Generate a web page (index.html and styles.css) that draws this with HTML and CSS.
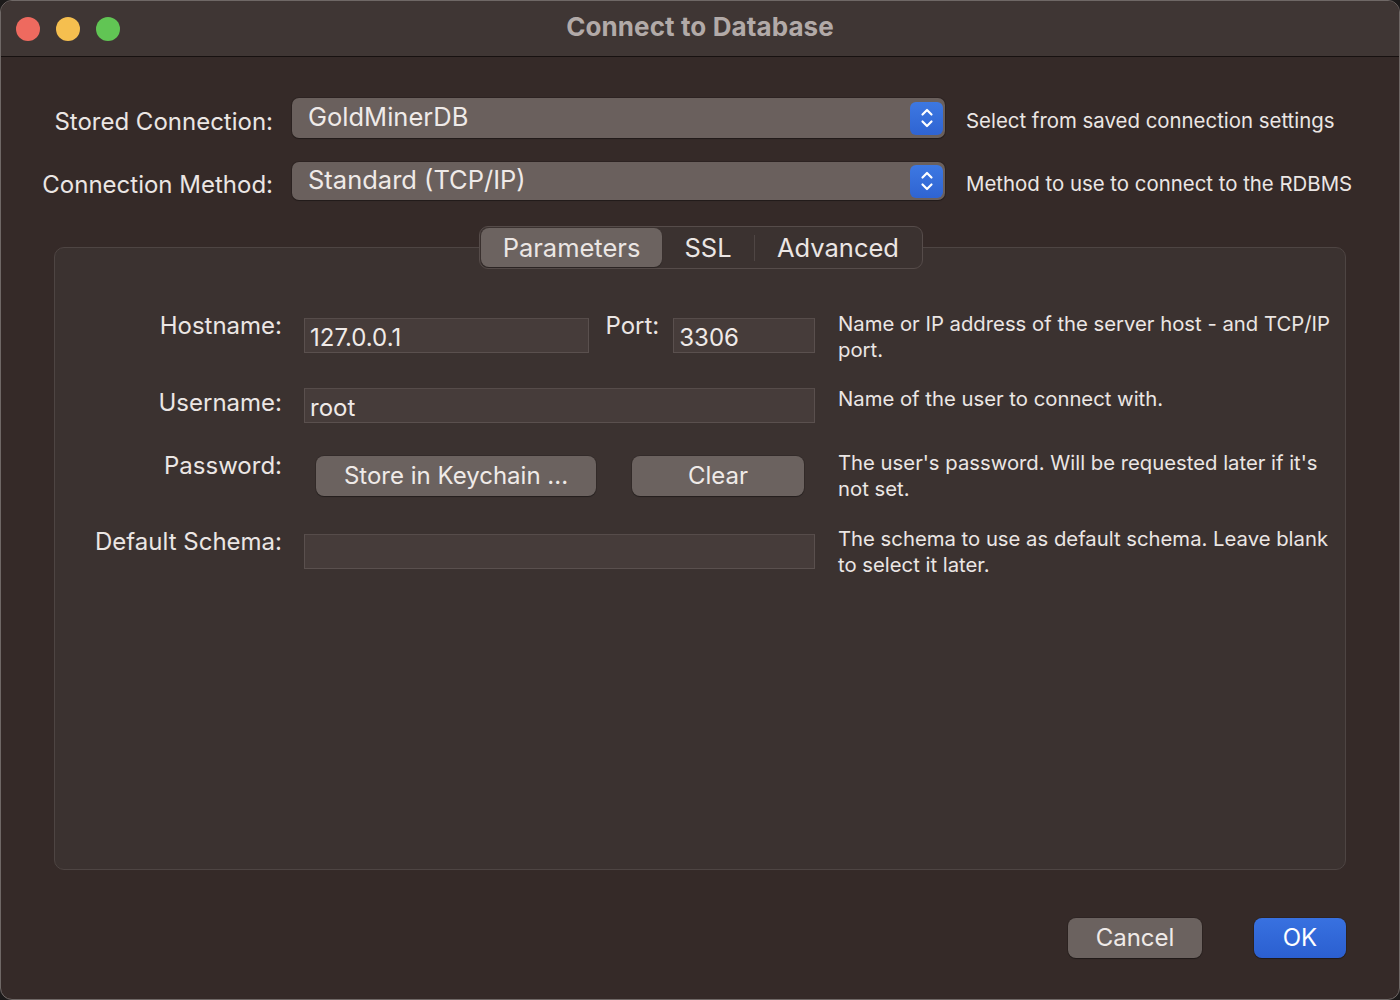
FILE: index.html
```html
<!DOCTYPE html>
<html lang="en">
<head>
<meta charset="utf-8">
<title>Connect to Database</title>
<link rel="stylesheet" href="styles.css">
</head>
<body>
<div class="window">
  <div class="titlebar">
    <div class="lights">
      <span class="light red"></span>
      <span class="light yellow"></span>
      <span class="light green"></span>
    </div>
    <div class="title">Connect to Database</div>
    <div class="spacer"></div>
  </div>
  <div class="content">
    <div class="top-grid">
      <div class="top-label">Stored Connection:</div>
      <div class="popup popup-tall">
        <span class="popup-text">GoldMinerDB</span>
        <span class="stepper">
          <svg width="16" height="24" viewBox="0 0 16 24"><path d="M3.5 8.5 L8 4 L12.5 8.5" fill="none" stroke="#fff" stroke-width="2.2" stroke-linecap="round" stroke-linejoin="round"/><path d="M3.5 15.5 L8 20 L12.5 15.5" fill="none" stroke="#fff" stroke-width="2.2" stroke-linecap="round" stroke-linejoin="round"/></svg>
        </span>
      </div>
      <div class="top-desc">Select from saved connection settings</div>

      <div class="top-label">Connection Method:</div>
      <div class="popup">
        <span class="popup-text">Standard (TCP/IP)</span>
        <span class="stepper">
          <svg width="16" height="24" viewBox="0 0 16 24"><path d="M3.5 8.5 L8 4 L12.5 8.5" fill="none" stroke="#fff" stroke-width="2.2" stroke-linecap="round" stroke-linejoin="round"/><path d="M3.5 15.5 L8 20 L12.5 15.5" fill="none" stroke="#fff" stroke-width="2.2" stroke-linecap="round" stroke-linejoin="round"/></svg>
        </span>
      </div>
      <div class="top-desc">Method to use to connect to the RDBMS</div>
    </div>

    <div class="group">
      <div class="tabs-wrap">
        <div class="tabs">
          <span class="tab selected">Parameters</span>
          <span class="tab tab-ssl">SSL</span>
          <span class="tab-sep"></span>
          <span class="tab tab-adv">Advanced</span>
        </div>
      </div>
      <div class="group-box">
        <div class="form-row row-host">
          <div class="f-label">Hostname:</div>
          <div class="f-field host-field">
            <div class="input input-host">127.0.0.1</div>
            <div class="port-label">Port:</div>
            <div class="input input-port">3306</div>
          </div>
          <div class="f-desc">Name or IP address of the server host - and TCP/IP<br>port.</div>
        </div>
        <div class="form-row row-user">
          <div class="f-label">Username:</div>
          <div class="f-field"><div class="input input-full">root</div></div>
          <div class="f-desc">Name of the user to connect with.</div>
        </div>
        <div class="form-row row-pass">
          <div class="f-label">Password:</div>
          <div class="f-field pass-field">
            <div class="button btn-keychain">Store in Keychain ...</div>
            <div class="button btn-clear">Clear</div>
          </div>
          <div class="f-desc">The user's password. Will be requested later if it's<br>not set.</div>
        </div>
        <div class="form-row row-schema">
          <div class="f-label">Default Schema:</div>
          <div class="f-field"><div class="input input-full"></div></div>
          <div class="f-desc">The schema to use as default schema. Leave blank<br>to select it later.</div>
        </div>
      </div>
    </div>

    <div class="actions">
      <div class="button btn-cancel">Cancel</div>
      <div class="button btn-ok">OK</div>
    </div>
  </div>
</div>
</body>
</html>
```

FILE: styles.css
```css
* { box-sizing: border-box; }

html, body {
  margin: 0;
  padding: 0;
  background: #1c1a1a;
}

body {
  font-family: "Inter", "Liberation Sans", sans-serif;
  color: #ebe6e4;
}

.window {
  width: 1400px;
  height: 1000px;
  border: 1px solid #6f6866;
  border-radius: 12px;
  overflow: hidden;
  background: #352a28;
  display: flex;
  flex-direction: column;
}

.titlebar {
  height: 56px;
  flex: none;
  background: #3f3634;
  border-bottom: 1px solid #171110;
  display: grid;
  grid-template-columns: 1fr auto 1fr;
  align-items: center;
}

.lights {
  display: flex;
  gap: 16px;
  padding-left: 15px;
}

.light {
  width: 24px;
  height: 24px;
  border-radius: 50%;
  display: block;
}
.red { background: #ee6a5f; }
.yellow { background: #f5bf4f; }
.green { background: #61c554; }

.title {
  font-weight: 700;
  font-size: 26px;
  color: #b2aaa8;
  letter-spacing: 0.1px;
  padding-bottom: 4px;
}

.content {
  flex: 1;
  display: flex;
  flex-direction: column;
  padding-top: 41px;
}

/* top popups */
.top-grid {
  display: grid;
  grid-template-columns: 272px 653px auto;
  grid-template-rows: 40px 38px;
  row-gap: 24px;
  column-gap: 19px;
  align-items: center;
}

.top-label {
  text-align: right;
  font-size: 24px;
  padding-top: 6px;
}

.top-desc {
  font-size: 20.4px;
  margin-left: 2px;
  padding-top: 5px;
}

.popup {
  height: 38px;
  background: #6a605d;
  border-radius: 7px;
  box-shadow: 0 0 0 1px rgba(0,0,0,0.15), 0 1px 1px rgba(0,0,0,0.25);
  display: flex;
  align-items: center;
  justify-content: space-between;
  padding: 0 2px 0 16px;
}
.popup-tall { height: 40px; }

.popup-text {
  font-size: 25.5px;
  color: #efeae8;
  padding-bottom: 3px;
}

.stepper {
  width: 33px;
  height: 33px;
  border-radius: 6px;
  background: linear-gradient(#3d78e2, #2f64d2);
  display: flex;
  align-items: center;
  justify-content: center;
}

/* group */
.group {
  margin-top: 26px;
  display: flex;
  flex-direction: column;
}

.tabs-wrap {
  display: flex;
  justify-content: center;
  margin-bottom: -22px;
  position: relative;
  z-index: 1;
  padding-left: 2px;
}

.tabs {
  height: 43px;
  width: 444px;
  border: 1px solid #564c4a;
  border-radius: 9px;
  background: #3b3230;
  display: flex;
  align-items: center;
  padding: 1px;
}

.tab {
  font-size: 25.5px;
  color: #ebe6e4;
  height: 39px;
  display: flex;
  align-items: center;
  justify-content: center;
  padding-bottom: 1px;
}

.tab.selected {
  width: 181px;
  background: #6c6360;
  border-radius: 8px;
  box-shadow: 0 1px 1px rgba(0,0,0,0.3);
}

.tab-ssl { width: 92px; }
.tab-sep {
  width: 1px;
  height: 26px;
  background: #4f4644;
}
.tab-adv { flex: 1; }

.group-box {
  margin: 0 53px;
  height: 623px;
  border: 1px solid #4e4543;
  border-radius: 10px;
  background: #3b3230;
  padding-top: 62px;
  display: flex;
  flex-direction: column;
}

.form-row {
  display: grid;
  grid-template-columns: 227px 511px 1fr;
  column-gap: 22px;
  align-items: start;
}

.f-label {
  text-align: right;
  font-size: 24px;
  line-height: 28px;
}

.f-desc {
  font-size: 20.3px;
  line-height: 26px;
  margin-left: 1px;
}

.input {
  height: 35px;
  background: #463c3a;
  border: 1px solid #5a504e;
  border-top-color: #564c4a;
  font-size: 24px;
  line-height: 33px;
  padding: 2px 0 0 5px;
  color: #efeae8;
}

.host-field {
  display: flex;
  align-items: flex-start;
}
.input-host { width: 286px; }
.port-label {
  font-size: 24px;
  line-height: 28px;
  margin: -6px 14px 0 16px;
}
.input-port { width: 142px; }
.input-full { width: 511px; }

.row-host .f-label { margin-top: 2px; }
.row-host .f-field { margin-top: 8px; }
.row-host .f-desc { margin-top: 1px; }

.row-user { margin-top: 24px; }
.row-user .f-label { margin-top: 2px; }
.row-user .f-field { margin-top: 1px; }
.row-user .f-desc { margin-top: -1px; }

.row-pass { margin-top: 27px; }
.row-pass .f-label { margin-top: 2px; }
.row-pass .f-field { margin-top: 6px; }

.row-schema { margin-top: 24px; }
.row-schema .f-label { margin-top: 2px; }
.row-schema .f-field { margin-top: 8px; }

.pass-field {
  display: flex;
  gap: 36px;
  padding-left: 12px;
}

.button {
  height: 40px;
  border-radius: 8px;
  background: #6b625f;
  box-shadow: 0 0 0 1px rgba(0,0,0,0.12), 0 1px 1px rgba(0,0,0,0.3);
  font-size: 24px;
  color: #efeae8;
  display: flex;
  align-items: center;
  justify-content: center;
  padding-bottom: 1px;
}

.btn-keychain { width: 280px; }
.btn-clear { width: 172px; }

.actions {
  margin-top: 48px;
  display: flex;
  justify-content: flex-end;
  gap: 52px;
  padding-right: 53px;
}

.btn-cancel { width: 134px; }
.btn-ok {
  width: 92px;
  background: linear-gradient(#3871e0, #2b5fd0);
  color: #fff;
}
```
